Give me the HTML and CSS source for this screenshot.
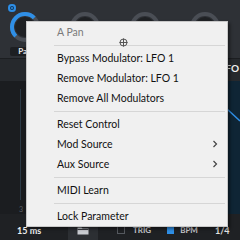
FILE: index.html
```html
<!DOCTYPE html>
<html lang="en">
<head>
  <meta charset="UTF-8">
  <meta name="viewport" content="width=device-width, initial-scale=1.0">
  <title>Modulation menu</title>
  <link rel="stylesheet" href="styles.css">
</head>
<body>
  <div class="app">
    <div class="top">
      <div class="knob-cell">
        <div class="power"></div>
        <svg class="knob" width="36" height="36" viewBox="0 0 36 36">
          <circle cx="18" cy="18" r="13" fill="none" stroke="#4a4e55" stroke-width="4"/>
          <path d="M8.8 27.2 A13 13 0 0 1 27.2 8.8" fill="none" stroke="#2f8fe6" stroke-width="4"/>
          <circle cx="18" cy="18" r="10" fill="#1f2124"/>
        </svg>
        <div class="label">Pan</div>
      </div>
      <div class="knob-cell">
        <svg class="knob" width="36" height="36" viewBox="0 0 36 36">
          <circle cx="18" cy="18" r="13" fill="none" stroke="#4a4e55" stroke-width="4"/>
          <circle cx="18" cy="18" r="10" fill="#1f2124"/>
        </svg>
      </div>
      <div class="knob-cell">
        <svg class="knob" width="36" height="36" viewBox="0 0 36 36">
          <circle cx="18" cy="18" r="13" fill="none" stroke="#4a4e55" stroke-width="4"/>
          <circle cx="18" cy="18" r="10" fill="#1f2124"/>
        </svg>
      </div>
      <div class="knob-cell">
        <svg class="knob" width="36" height="36" viewBox="0 0 36 36">
          <circle cx="18" cy="18" r="13" fill="none" stroke="#4a4e55" stroke-width="4"/>
          <circle cx="18" cy="18" r="10" fill="#1f2124"/>
        </svg>
        <div class="side-boxes"><span></span><span></span></div>
      </div>
    </div>
    <div class="band"><span class="lfo-title">LFO</span></div>
    <div class="main">
      <div class="graph">
        <span class="tick">3</span>
      </div>
      <div class="lfo-view">
        <svg width="40" height="120" viewBox="0 0 40 120">
          <path d="M0 3 L40 40" stroke="#2f8fe6" stroke-width="1.5" fill="none"/>
        </svg>
      </div>
    </div>
    <div class="bottom">
      <span class="ms">15 ms</span>
      <div class="folder-btn">
        <svg width="12" height="9" viewBox="0 0 12 9">
          <path d="M0.5 1.5 H4.5 L5.5 2.5 H11.5 V8.5 H0.5 Z" fill="#c9ccd1"/>
          <path d="M0.5 3.5 H11.5" stroke="#3a3d42"/>
        </svg>
      </div>
      <span class="check"></span><span class="opt">TRIG</span>
      <span class="bpm-icon"></span><span class="opt">BPM</span>
      <span class="rate">1/4</span>
    </div>

    <div class="menu">
      <div class="item disabled">A Pan</div>
      <div class="sep"></div>
      <div class="item">Bypass Modulator: LFO 1</div>
      <div class="item">Remove Modulator: LFO 1</div>
      <div class="item">Remove All Modulators</div>
      <div class="sep"></div>
      <div class="item">Reset Control</div>
      <div class="item">Mod Source
        <svg class="arrow" width="6" height="8" viewBox="0 0 6 8"><path d="M1.5 1 L4.5 4 L1.5 7" fill="none" stroke="#444" stroke-width="1.2"/></svg>
      </div>
      <div class="item">Aux Source
        <svg class="arrow" width="6" height="8" viewBox="0 0 6 8"><path d="M1.5 1 L4.5 4 L1.5 7" fill="none" stroke="#444" stroke-width="1.2"/></svg>
      </div>
      <div class="sep"></div>
      <div class="item">MIDI Learn</div>
      <div class="sep"></div>
      <div class="item">Lock Parameter</div>
    </div>

    <svg class="cursor" width="9" height="9" viewBox="0 0 9 9">
      <circle cx="4.5" cy="4.5" r="3.5" fill="none" stroke="#555" stroke-width="1"/>
      <path d="M4.5 0.5 V8.5 M0.5 4.5 H8.5" stroke="#555" stroke-width="1"/>
    </svg>
  </div>
</body>
</html>
```

FILE: styles.css
```css
body {
  margin: 0;
  background-color: #1a1c1f;
  font-family: "Lato", "Noto Sans", sans-serif;
}
.app {
  position: relative;
  width: 240px;
  height: 240px;
  overflow: hidden;
  display: flex;
  flex-direction: column;
}
.top {
  height: 58px;
  background-color: #2e3136;
  display: flex;
  gap: 24px;
  padding-left: 7px;
  padding-top: 9px;
  box-sizing: border-box;
}
.knob-cell {
  position: relative;
  width: 36px;
  display: flex;
  flex-direction: column;
  align-items: center;
}
.power {
  position: absolute;
  left: 1px;
  top: -5px;
  width: 8px;
  height: 8px;
  border-radius: 50%;
  background-color: #2f8fe6;
  box-shadow: inset 0 0 0 2px #2f8fe6, inset 0 0 0 3px #10355a;
}
.label {
  margin-top: 2px;
  width: 30px;
  height: 9px;
  background-color: #1d1f22;
  border-radius: 2px;
  color: #e6e6e6;
  font-size: 8px;
  font-weight: bold;
  line-height: 9px;
  text-align: center;
}
.side-boxes {
  position: absolute;
  right: -30px;
  top: 23px;
  display: flex;
  flex-direction: column;
  gap: 5px;
}
.side-boxes span {
  display: block;
  width: 10px;
  height: 9px;
  background-color: #24272b;
}
.band {
  height: 22px;
  background-color: #26292d;
  border-top: 1px solid #1c1e21;
  display: flex;
  justify-content: flex-end;
  overflow: hidden;
}
.lfo-title {
  color: #f0f0f0;
  font-size: 10px;
  font-weight: bold;
  line-height: 18px;
  margin-right: 1px;
}
.main {
  flex: 1;
  display: flex;
}
.graph {
  flex: 1;
  position: relative;
  background-color: #191b1e;
  border-left: 20px solid #1b1d20;
}
.graph::before {
  content: "";
  position: absolute;
  left: 0;
  top: 8px;
  bottom: 14px;
  width: 1px;
  background-color: #2c3a46;
}
.tick {
  position: absolute;
  left: -1px;
  bottom: 1px;
  color: #5a5e64;
  font-size: 7px;
}
.lfo-view {
  width: 40px;
  background-color: #0f2535;
}
.lfo-view svg {
  display: block;
}
.bottom {
  height: 26px;
  box-sizing: border-box;
  padding-top: 6px;
  background-color: #1f2124;
  display: flex;
  align-items: center;
  padding-left: 17px;
  color: #d8dadd;
  font-size: 8px;
  font-weight: bold;
}
.ms {
  width: 51px;
  font-size: 9px;
  color: #f0f0f0;
}
.folder-btn {
  width: 30px;
  height: 20px;
  background-color: #2c2f33;
  display: flex;
  align-items: center;
  justify-content: center;
  margin-right: 19px;
}
.check {
  width: 6px;
  height: 6px;
  border: 1px solid #55595f;
  margin-right: 8px;
}
.opt {
  margin-right: 19px;
  color: #c8cacd;
}
.bpm-icon {
  width: 7px;
  height: 7px;
  background-color: #2f8fe6;
  margin-right: 6px;
  margin-left: -3px;
}
.rate {
  margin-left: -2px;
  color: #e6e6e6;
  font-size: 9px;
}
.menu {
  position: absolute;
  left: 26px;
  top: 21px;
  width: 202px;
  background-color: #f0f0f0;
  border: 1px solid #c8c8c8;
  box-sizing: border-box;
  padding: 0;
  box-shadow: 2px 2px 3px rgba(0, 0, 0, 0.45);
  font-size: 10.5px;
  color: #111;
}
.item {
  position: relative;
  height: 20px;
  line-height: 20px;
  padding-left: 30px;
}
.disabled {
  color: #7a7a7a;
}
.sep {
  height: 1px;
  margin: 3px 2px 2px 27px;
  background-color: #d6d6d6;
}
.arrow {
  position: absolute;
  right: 9px;
  top: 6px;
}
.cursor {
  position: absolute;
  left: 119px;
  top: 38px;
}
```
